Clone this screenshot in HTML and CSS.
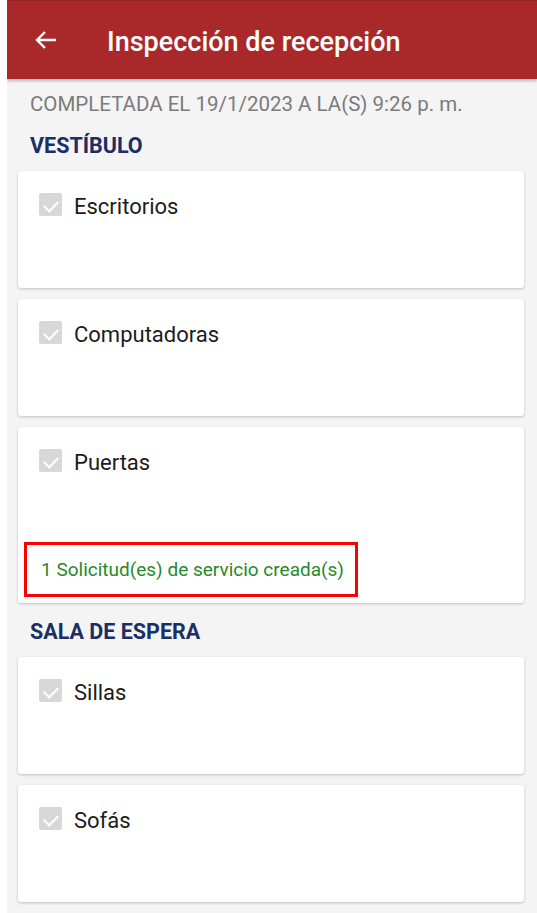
FILE: index.html
```html
<!DOCTYPE html>
<html lang="es">
<head>
    <meta charset="UTF-8">
    <meta name="viewport" content="width=device-width, initial-scale=1.0">
    <title>Inspección de recepción</title>
    <link rel="stylesheet" href="styles.css">
</head>
<body>
    <div class="app">
        <!-- Barra superior -->
        <header class="app-bar">
            <span class="back">
                <svg width="22" height="22" viewBox="0 0 22 22">
                    <path d="M21 11H2M10 3L2 11l8 8" fill="none" stroke="#fff" stroke-width="2.4"/>
                </svg>
            </span>
            <h1 class="app-title">Inspección de recepción</h1>
        </header>

        <main class="content">
            <p class="completed">COMPLETADA EL 19/1/2023 A LA(S) 9:26 p. m.</p>

            <h2 class="section-title">VESTÍBULO</h2>
            <div class="card">
                <div class="item"><span class="check"></span><span class="label">Escritorios</span></div>
            </div>
            <div class="card">
                <div class="item"><span class="check"></span><span class="label">Computadoras</span></div>
            </div>
            <div class="card card-tall">
                <div class="item"><span class="check"></span><span class="label">Puertas</span></div>
                <div class="requests">1 Solicitud(es) de servicio creada(s)</div>
            </div>

            <h2 class="section-title">SALA DE ESPERA</h2>
            <div class="card">
                <div class="item"><span class="check"></span><span class="label">Sillas</span></div>
            </div>
            <div class="card">
                <div class="item"><span class="check"></span><span class="label">Sofás</span></div>
            </div>
        </main>
    </div>
</body>
</html>
```

FILE: styles.css
```css
* {
    margin: 0;
    padding: 0;
    box-sizing: border-box;
}

body {
    background: #fff;
    font-family: Roboto, "Liberation Sans", sans-serif;
}

.app {
    margin-left: 7px;
    height: 913px;
    background: #f4f4f4;
    overflow: hidden;
}

.app-bar {
    height: 79px;
    background: #a9292b;
    display: flex;
    align-items: center;
    box-shadow: 0 2px 3px rgba(0, 0, 0, 0.25);
    border-top: 1px solid #8f2224;
}

.back {
    display: flex;
    margin-left: 28px;
}

.app-title {
    margin-left: 50px;
    margin-top: 3px;
    color: #fff;
    font-size: 27px;
    font-weight: 500;
}

.content {
    padding: 13px 13px 0 11px;
}

.completed {
    padding-left: 12px;
    margin-bottom: 18px;
    color: #7b7b7b;
    font-size: 20.5px;
    line-height: 24px;
}

.section-title {
    padding-left: 12px;
    margin-bottom: 13px;
    color: #1b2f66;
    font-size: 21.5px;
    font-weight: 700;
    line-height: 24px;
}

.card {
    background: #fff;
    border-radius: 3px;
    box-shadow: 0 1px 3px rgba(0, 0, 0, 0.22);
    height: 117px;
    margin-bottom: 11px;
    padding: 22px 0 0 21px;
    display: flex;
    flex-direction: column;
}

.card-tall {
    height: 176px;
    margin-bottom: 17px;
}

.item {
    display: flex;
    align-items: center;
    color: #1c1c1c;
    font-size: 22px;
    height: 23px;
}

.label {
    padding-top: 3px;
}

.check {
    width: 23px;
    height: 23px;
    margin-right: 12px;
    border-radius: 2px;
    background: #d7d7d7;
    position: relative;
}

/* palomita blanca */
.check::after {
    content: '';
    position: absolute;
    left: 5px;
    top: 4px;
    width: 12px;
    height: 7px;
    border-left: 2px solid #fff;
    border-bottom: 2px solid #fff;
    transform: translate(0, 3px) rotate(-45deg);
}

.requests {
    margin-top: auto;
    margin-left: -15px;
    margin-bottom: 6px;
    width: 334px;
    height: 55px;
    border: 3px solid #f00;
    padding-left: 14px;
    display: flex;
    align-items: center;
    color: #26892a;
    font-size: 19px;
}
```
